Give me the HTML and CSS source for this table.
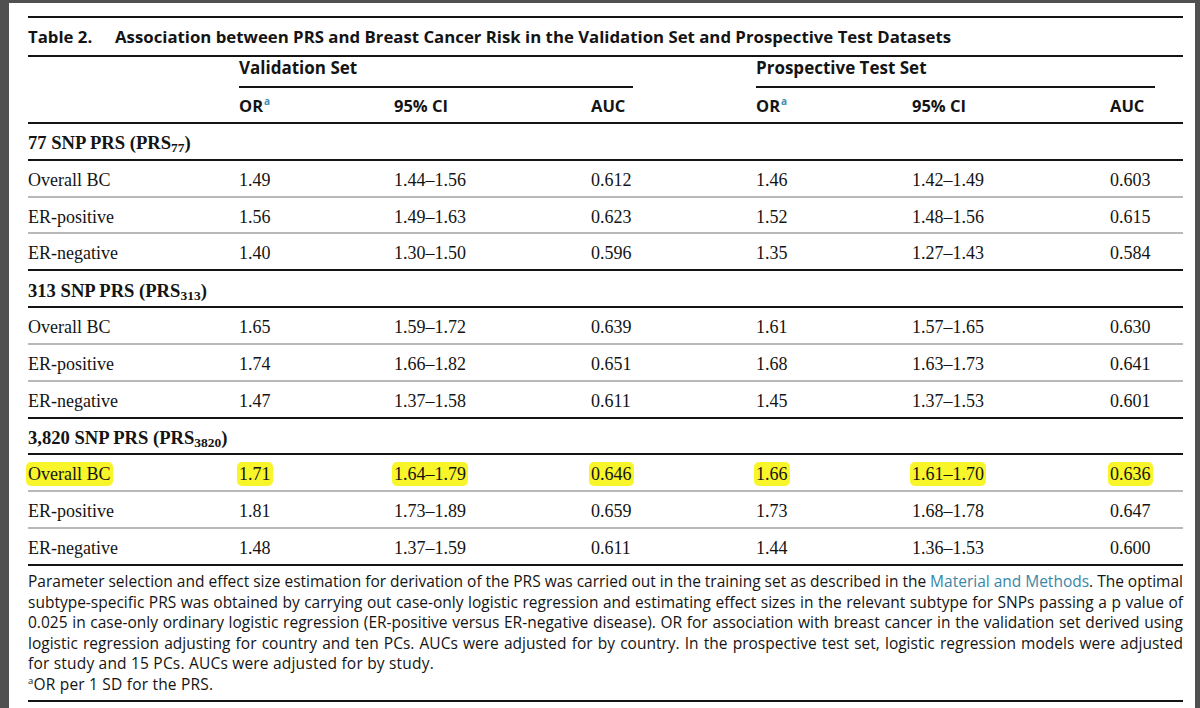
FILE: index.html
```html
<!DOCTYPE html>
<html lang="en">
<head>
<meta charset="utf-8">
<title>Table 2</title>
<link rel="stylesheet" href="styles.css">
</head>
<body>
<div class="sheet">
  <div class="tbl">
    <div class="title"><span class="tnum">Table 2.</span><span>Association between PRS and Breast Cancer Risk in the Validation Set and Prospective Test Datasets</span></div>

    <div class="row grouphead">
      <div></div>
      <div class="span3"><span class="gl gl-val">Validation Set</span></div>
      <div class="span3"><span class="gl gl-pro">Prospective Test Set</span></div>
    </div>

    <div class="row colhead">
      <div></div>
      <div>OR<sup class="fn">a</sup></div>
      <div>95% CI</div>
      <div>AUC</div>
      <div>OR<sup class="fn">a</sup></div>
      <div>95% CI</div>
      <div>AUC</div>
    </div>

    <div class="row group"><div class="full">77 SNP PRS (PRS<sub>77</sub>)</div></div>
    <div class="row data"><div>Overall BC</div><div>1.49</div><div>1.44–1.56</div><div>0.612</div><div>1.46</div><div>1.42–1.49</div><div>0.603</div></div>
    <div class="row data"><div>ER-positive</div><div>1.56</div><div>1.49–1.63</div><div>0.623</div><div>1.52</div><div>1.48–1.56</div><div>0.615</div></div>
    <div class="row data last"><div>ER-negative</div><div>1.40</div><div>1.30–1.50</div><div>0.596</div><div>1.35</div><div>1.27–1.43</div><div>0.584</div></div>

    <div class="row group"><div class="full">313 SNP PRS (PRS<sub>313</sub>)</div></div>
    <div class="row data"><div>Overall BC</div><div>1.65</div><div>1.59–1.72</div><div>0.639</div><div>1.61</div><div>1.57–1.65</div><div>0.630</div></div>
    <div class="row data"><div>ER-positive</div><div>1.74</div><div>1.66–1.82</div><div>0.651</div><div>1.68</div><div>1.63–1.73</div><div>0.641</div></div>
    <div class="row data last"><div>ER-negative</div><div>1.47</div><div>1.37–1.58</div><div>0.611</div><div>1.45</div><div>1.37–1.53</div><div>0.601</div></div>

    <div class="row group"><div class="full">3,820 SNP PRS (PRS<sub>3820</sub>)</div></div>
    <div class="row data"><div><span class="hl">Overall BC</span></div><div><span class="hl">1.71</span></div><div><span class="hl">1.64–1.79</span></div><div><span class="hl">0.646</span></div><div><span class="hl">1.66</span></div><div><span class="hl">1.61–1.70</span></div><div><span class="hl">0.636</span></div></div>
    <div class="row data"><div>ER-positive</div><div>1.81</div><div>1.73–1.89</div><div>0.659</div><div>1.73</div><div>1.68–1.78</div><div>0.647</div></div>
    <div class="row data last"><div>ER-negative</div><div>1.48</div><div>1.37–1.59</div><div>0.611</div><div>1.44</div><div>1.36–1.53</div><div>0.600</div></div>

    <div class="notes">
      <span class="ln j">Parameter selection and effect size estimation for derivation of the PRS was carried out in the training set as described in the <span class="link">Material and Methods</span>. The optimal</span>
      <span class="ln j">subtype-specific PRS was obtained by carrying out case-only logistic regression and estimating effect sizes in the relevant subtype for SNPs passing a p value of</span>
      <span class="ln j">0.025 in case-only ordinary logistic regression (ER-positive versus ER-negative disease). OR for association with breast cancer in the validation set derived using</span>
      <span class="ln j">logistic regression adjusting for country and ten PCs. AUCs were adjusted for by country. In the prospective test set, logistic regression models were adjusted</span>
      <span class="ln">for study and 15 PCs. AUCs were adjusted for by study.</span>
      <span class="ln"><sup class="fa">a</sup>OR per 1 SD for the PRS.</span>
    </div>
  </div>
</div>
</body>
</html>
```

FILE: styles.css
```css
* { box-sizing: border-box; }

html, body {
  margin: 0;
  padding: 0;
  background: #505050;
}

body {
  width: 1200px;
  height: 708px;
  overflow: hidden;
}

.sheet {
  margin: 3px 0 0 9px;
  width: 1186px;
  height: 705px;
  background: #ffffff;
  padding: 13px 0 0 19px;
  color: #141414;
}

.tbl {
  width: 1155px;
}

.title {
  height: 41px;
  border-top: 2px solid #141414;
  border-bottom: 2px solid #141414;
  display: flex;
  align-items: center;
  font-family: "Open Sans", "Noto Sans", sans-serif;
  font-weight: 700;
  font-size: 16.8px;
  white-space: nowrap;
}

.tnum {
  display: inline-block;
  width: 87px;
}

.row {
  display: grid;
  grid-template-columns: 211px 155px 197px 165px 156px 198px 73px;
  align-items: center;
}

.grouphead {
  height: 31px;
  align-items: end;
  font-family: "Open Sans", "Noto Sans", sans-serif;
  font-weight: 700;
  font-size: 17px;
}

.span3 {
  grid-column: span 3;
}

.gl {
  display: block;
  line-height: 20px;
  padding-bottom: 8px;
  border-bottom: 2px solid #141414;
}

.gl-val { width: 394px; }
.gl-pro { width: 399px; }

.colhead {
  height: 36px;
  border-bottom: 2px solid #141414;
  font-family: "Open Sans", "Noto Sans", sans-serif;
  font-weight: 700;
  font-size: 16.5px;
}

.fn {
  color: #3d8db3;
  font-size: 10px;
  vertical-align: 7px;
  line-height: 0;
  margin-left: 1px;
}

.group,
.data {
  height: 36.83px;
  padding-top: 4px;
  font-family: "Liberation Serif", "Times New Roman", serif;
  font-size: 18px;
}

.group {
  border-bottom: 2px solid #141414;
  font-weight: 700;
  font-size: 18.6px;
}

.group .full {
  grid-column: 1 / -1;
}

.group sub {
  font-size: 13.5px;
  vertical-align: -3px;
  line-height: 0;
}

.data {
  border-bottom: 2px solid #b9b9b9;
}

.data.last {
  border-bottom: 2px solid #141414;
}

.hl {
  background: #f8f52a;
  border-radius: 5px;
  padding: 2px 2px;
  margin: 0 -2px;
}

.notes {
  padding: 5px 0 5px;
  border-bottom: 2px solid #141414;
  font-family: "Open Sans", "Noto Sans", sans-serif;
  font-size: 15.5px;
  line-height: 20.6px;
}

.ln {
  display: block;
  white-space: nowrap;
  letter-spacing: 0.2px;
}

.ln.j {
  text-align: justify;
  text-align-last: justify;
  letter-spacing: 0;
  word-spacing: -0.6px;
}

.link {
  color: #3a86a8;
}

.fa {
  font-size: 9.5px;
  vertical-align: 6px;
  line-height: 0;
}
```
